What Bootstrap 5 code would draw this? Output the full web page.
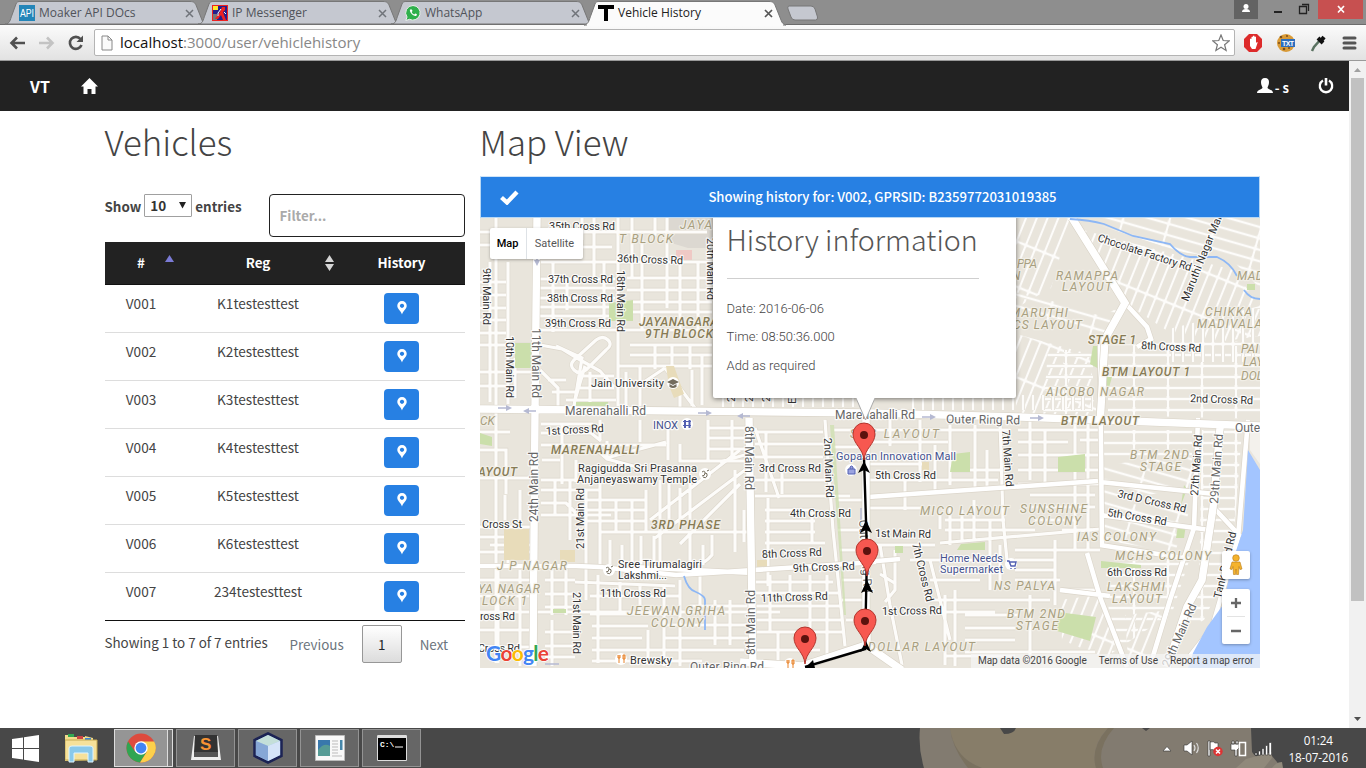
<!DOCTYPE html>
<html lang="en">
<head>
<meta charset="utf-8">
<title>Vehicle History</title>
<meta name="viewport" content="width=device-width, initial-scale=1">
<link rel="stylesheet" href="https://cdn.jsdelivr.net/npm/bootstrap@5.3.0/dist/css/bootstrap.min.css">
<style>
:root{--src:"Source Sans Pro","Noto Sans CJK SC",sans-serif;--ui:"Segoe UI","Open Sans",sans-serif}
html,body{height:768px;overflow:hidden}
body{font-family:var(--src);font-size:13.4px;line-height:20px;color:#444;background:#fff}
svg{display:block;flex:none}
/* browser frame */
.tabstrip{height:25px;background:#8e8e8e;padding-left:5px;font:12px/24px var(--ui);color:#50535a;border-bottom:1px solid #6c6c6c}
.btab{width:202px;height:25px;margin-right:-9px;padding:1px 13px 0 14px;position:relative}
.btab>svg.shape{position:absolute;left:0;top:0;z-index:0}
.btab>*{position:relative}
.btab.front{z-index:2;color:#222}
.toolbar{height:36px;background:linear-gradient(#fbfbfb,#e2e2e2);border-bottom:1px solid #9a9a9a;padding:0 8px 0 9px}
.omnibox{height:27px;border:1px solid #b4b4b4;border-radius:2px;background:#fff;font:15.05px/25px var(--ui);color:#888;width:1141px}
.omnibox b{font-weight:400;color:#111}
/* page */
.page-area{height:667px}
.scroller{width:17px;background:#f1f1f1}
.thumb{width:13px;height:523px;background:#c1c1c1;margin:0 auto}
.topbar{height:50px;background:#222;color:#fff;padding:0 15px 0 30px;font-weight:700}
.wrap-1170{width:1170px;--bs-gutter-x:30px;padding:0 15px;margin:0 auto}
.wrap-1170>.row{--bs-gutter-x:30px}
.page-title{font-weight:200;font-size:34.8px;line-height:38px;margin:11px 0 0;height:54px;color:#444}
.len{line-height:18px}
.len select{width:48px;height:23px;border:1px solid #a0a0a0;border-radius:1px;background:#fff;font:700 13.5px/18px var(--src);color:#333;padding:0 0 1px 5px;appearance:none}
.filter{width:196px;height:43px;border:1px solid #222;border-radius:4px;padding:0 10px 2px;font-weight:700;color:#333;background:#fff}
.filter::placeholder{color:#aaa;opacity:1}
.vt{table-layout:fixed;width:360px;margin:5px 0 0;border-bottom:1px solid #111;color:#444;text-align:center;font-size:13.6px}
.vt th{background:#222;color:#fff;height:42px;padding:0 0 2px;border-bottom:1px solid #111;position:relative;vertical-align:middle;font-size:13.4px}
.vt td{height:48px;padding:8px 0 0;border-bottom:1px solid #ddd;vertical-align:top}
.vt tr:last-child td{border-bottom:0}
.sort{position:absolute;right:4px;top:12px}
.btn-pin{width:35px;height:31px;background:#2780e3;border:0;border-radius:4px;padding:0;display:inline-flex;align-items:center;justify-content:center}
.pg-now{width:40px;height:38px;border:1px solid #979797;border-radius:2px;background:linear-gradient(#fff,#dcdcdc)}
.notice{height:42px;background:#2780e3;color:#fff;border-radius:0;border:1px solid #b7d7f5;border-top-color:#cfe4f8;margin:0;padding:0;font-weight:500;font-size:13.1px}
/* map */
.mapbox{height:450px;position:relative;overflow:hidden;background:#e9e5dc;font-family:Roboto,sans-serif}
.mapbox .ctl{position:absolute;background:#fff;border-radius:2px;box-shadow:0 1px 3px rgba(0,0,0,.3)}
.maptype{left:10px;top:10px;width:93px;height:31px;font-size:11px;color:#565656}
.bubble{position:absolute;left:233px;top:-6px;width:303px;height:186px;background:#fff;box-shadow:0 1px 5px rgba(0,0,0,.5);padding:7px 14px 0;font-weight:300;font-size:13px;border-radius:2px}
.bubble h3{font:200 28.7px/40px var(--src);margin:0;white-space:nowrap;color:#555}
.bubble hr{width:252px;margin:19px 0 16px;border-color:#bbb;opacity:.7}
.bubble p{margin:0;line-height:28.4px}
.legal{position:absolute;right:0;bottom:0;height:14px;background:rgba(245,245,245,.72);font-size:10px;line-height:14px;color:#444;padding:0 6px 0 7px;gap:12px;white-space:nowrap}
.lb{font:11px Roboto,sans-serif;fill:#333;stroke:#fff;stroke-width:2.4px;stroke-opacity:.8;paint-order:stroke;stroke-linejoin:round}
.lb .area{font-style:italic;fill:#a89f80;font-weight:400;stroke:#f4f1ea;font-size:12px}
.lb .dark{fill:#877b55;font-weight:500}
.lb .poi{fill:#45528f}
.lb .gr{fill:#666;font-size:12px}
/* taskbar */
.taskbar{height:40px;background:#484848;position:relative;color:#fff;font:11.7px/17px var(--ui)}
.task{width:59px;height:38px;border:1px solid #939393;background:#666;margin-right:3px}
.task.on{width:54px;background:#959595;border-color:#ddd;margin-right:0}
.task.pile{width:5px;border-left:0;background:#777;border-color:#ddd}
.wallpaper{position:absolute;right:0;top:0}
</style>
</head>
<body>
<header>
 <div class="tabstrip d-flex">
  <div class="btab d-flex align-items-center">
   <svg class="shape" width="202" height="25"><path d="M0 24C5 24 5 20 7 15L11 4C12 1.500 13 1.500 16 1.500H185C189 1.500 190 3 191 5L197 20C198 23 199 24 202 24Z" fill="#c5c8d0" stroke="#777"/></svg>
   <svg width="16" height="16"><rect width="16" height="16" fill="#2385b8"/><text x="1" y="12" font-family="Liberation Sans" font-size="10" textLength="14" lengthAdjust="spacingAndGlyphs" fill="#fff">API</text></svg>
   <span class="ms-1">Moaker API DOcs</span><svg class="ms-auto" width="9" height="9"><path d="M1 1l7 7M8 1l-7 7" stroke="#70747a" stroke-width="1.500"/></svg></div>
  <div class="btab d-flex align-items-center">
   <svg class="shape" width="202" height="25"><path d="M0 24C5 24 5 20 7 15L11 4C12 1.500 13 1.500 16 1.500H185C189 1.500 190 3 191 5L197 20C198 23 199 24 202 24Z" fill="#c5c8d0" stroke="#777"/></svg>
   <svg width="16" height="16"><rect width="16" height="16" fill="#e22"/><rect x="1" y="1" width="14" height="14" fill="#241f8c"/><path d="M1 1h5v4H1z" fill="#ffe92c"/><path d="M1 9h4v6H1z" fill="#777"/><path d="M10 2h3v3l-2 2 1 3 2 5h-3L9 10l-3 4H3l5-7z" fill="#e22"/><path d="M9 4L6 8v3M12 7l2 2" stroke="#fff" fill="none"/></svg>
   <span class="ms-1">IP Messenger</span><svg class="ms-auto" width="9" height="9"><path d="M1 1l7 7M8 1l-7 7" stroke="#70747a" stroke-width="1.500"/></svg></div>
  <div class="btab d-flex align-items-center">
   <svg class="shape" width="202" height="25"><path d="M0 24C5 24 5 20 7 15L11 4C12 1.500 13 1.500 16 1.500H185C189 1.500 190 3 191 5L197 20C198 23 199 24 202 24Z" fill="#c5c8d0" stroke="#777"/></svg>
   <svg width="16" height="16"><path d="M8 .5a7.300 7.300 0 11-3.500 13.800L.8 15.500 2 12A7.300 7.300 0 018 .5z" fill="#2fb04c" stroke="#eee"/><path d="M5 4.500c-1 2 3 7 6 6.500 1-.5 1-1.500.7-2l-1.500-.6-.9 1C8 9 7 8 6.700 7l.8-.9-.6-1.700z" fill="#fff"/></svg>
   <span class="ms-1">WhatsApp</span><svg class="ms-auto" width="9" height="9"><path d="M1 1l7 7M8 1l-7 7" stroke="#70747a" stroke-width="1.500"/></svg></div>
  <div class="btab front d-flex align-items-center">
   <svg class="shape" width="202" height="26"><path d="M0 25C5 24 5 20 7 15L11 4C12 1.500 13 1.500 16 1.500H185C189 1.500 190 3 191 5L197 20C198 23 199 24 202 25Z" fill="#fbfbfb" stroke="#777"/><path d="M3 25h196" stroke="#fbfbfb" stroke-width="2"/></svg>
   <svg width="16" height="16"><path d="M0 0h16v4h-6v12H6V4H0z"/></svg>
   <span class="ms-1">Vehicle History</span><svg class="ms-auto" width="9" height="9"><path d="M1 1l7 7M8 1l-7 7" stroke="#555" stroke-width="1.700"/></svg></div>
  <svg style="margin-left:8px" width="34" height="22"><path d="M4 6h22q3 0 4 3l2.500 8q.5 3-2 3H10q-3 0-4-3L3 9q-1-3 1-3z" fill="#c5c8d0" stroke="#777"/></svg>
  <svg class="ms-auto" width="132" height="24"><path d="M0 0h24v19H0z" fill="#636363"/><circle cx="12" cy="6.500" r="2.500" fill="#fff"/><path d="M8 12q0-3 4-3t4 3z" fill="#fff"/><path d="M40 11h8v2h-8z" fill="#222"/><path d="M65.500 6.500h7v7h-7zM68 4.500h6.500V11" fill="none" stroke="#222" stroke-width="1.300"/><path d="M84 0h45v19H84z" fill="#c75050"/><path d="M104 6l6 6.500M110 6l-6 6.500" stroke="#fff" stroke-width="1.700"/></svg>
 </div>
 <div class="toolbar d-flex align-items-center">
  <svg width="85" height="20"><g fill="none" stroke-width="2.600"><path d="M16 10H3M8 4.500L2.500 10 8 15.500" stroke="#505050"/><path d="M30 10h13M38 4.500l5.500 5.500-5.500 5.500" stroke="#c3c3c3"/><path d="M71.500 6A6 6 0 1 0 72.500 12" stroke="#505050"/></g><path d="M74 2.500v6.500h-6.500z" fill="#505050"/></svg>
  <div class="omnibox d-flex align-items-center">
   <svg width="12" height="16" style="margin-left:6px"><path d="M1 1h6l4 4v10H1zM7 1v4h4" fill="#fafafa" stroke="#888"/></svg>
   <span style="margin-left:7px"><b>localhost</b>:3000/user/vehiclehistory</span>
   <svg class="ms-auto me-1" width="18" height="18"><path d="M9 1l2.200 5.500 6 .4-4.600 3.800 1.500 5.800L9 13.300l-5.100 3.200 1.500-5.800L.8 6.900l6-.4z" fill="#fff" stroke="#777" stroke-width="1.200"/></svg>
  </div>
  <svg class="ms-auto" width="114" height="20"><path d="M5 1h8l5 5v8l-5 5H5l-5-5V6z" fill="#dd2b2b"/><path d="M6 13V6q1-1 1.500 0V4q1-1 1.500 0V3q1-1 1.500 0v1q1-1 1.500 0v6l1-1q1 0 .5 1l-2 6H8z" fill="#fff"/><circle cx="42" cy="10" r="9" fill="#d99b38"/><g fill="#7b4d18"><circle cx="37" cy="4" r="1.300"/><circle cx="43" cy="3" r="1"/><circle cx="35" cy="10" r="1"/><circle cx="40" cy="16" r="1.300"/><circle cx="45" cy="15" r="1"/></g><path d="M37 6h14v8H37z" fill="#2e6ebd"/><text x="38" y="12.500" font-size="7" font-weight="700" textLength="12" font-family="Liberation Sans" fill="#fff">TXT</text><path d="M68 18l2-4 7-8" stroke="#5a7261" stroke-width="2.500" fill="none"/><path d="M74 5l5 5M77 8l3-4" stroke="#111" stroke-width="4" fill="none"/><path d="M100 5h11M100 10h11M100 15h11" stroke="#555" stroke-width="3" stroke-linecap="round"/></svg>
 </div>
</header>

<main class="page-area d-flex">
 <div class="flex-grow-1">
  <nav class="topbar d-flex align-items-center">
   <span style="font-size:16px">VT</span>
   <svg style="margin-left:31px" width="17" height="16"><path d="M8.500 0L17 8.500h-2.500V16h-4v-5h-4v5h-4V8.500H0L6 2.500z" fill="#fff"/></svg>
   <svg class="ms-auto" width="16" height="16"><path d="M8 0c3 0 4 2 4 4 0 3-1 4-1.500 5.500 0 2 5.500 2 5.500 5.500H0c0-3.500 5.500-3.500 5.500-5.500C5 8 4 7 4 4c0-2 1-4 4-4z" fill="#fff"/></svg>
   <span style="margin-left:2px;padding-top:3px;font-size:13px">- s</span>
   <svg style="margin-left:29px" width="16" height="16"><path d="M5 2.600a6.200 6.200 0 1 0 6 0" fill="none" stroke="#fff" stroke-width="2.300"/><path d="M6.700 0h2.600v7.500H6.700z" fill="#fff"/></svg>
  </nav>
  <div class="wrap-1170"><div class="row">
   <section class="col-4">
    <h2 class="page-title">Vehicles</h2>
    <div class="d-flex justify-content-between" style="padding-top:18px">
     <label class="len fw-bold d-flex align-items-center" style="height:23px;gap:3px"><span>Show</span><span class="position-relative"><select class="d-block"><option>10</option></select><svg class="position-absolute" style="right:6px;top:8px" width="7" height="7"><path d="M0 0h7L3.500 6.500z" fill="#222"/></svg></span><span>entries</span></label>
     <input class="filter" placeholder="Filter...">
    </div>
    <table class="vt">
     <colgroup><col style="width:73px"><col style="width:161px"><col style="width:126px"></colgroup>
     <thead><tr><th>#<svg class="sort" width="9" height="18"><path d="M0 8L4.500 1 9 8z" fill="#7b7bd6"/></svg></th><th>Reg<svg class="sort" style="right:5px" width="9" height="18"><path d="M0 8L4.500 1 9 8zM0 10h9l-4.500 7z" fill="#d5d5d5"/></svg></th><th>History</th></tr></thead>
     <tbody id="rows"></tbody>
    </table>
    <div class="d-flex" style="padding-top:4px">
     <span style="width:185px;padding-top:7px">Showing 1 to 7 of 7 entries</span>
     <span class="d-flex align-items-center text-secondary" style="gap:18px;line-height:18px"><span>Previous</span><span class="pg-now d-flex align-items-center justify-content-center text-dark">1</span><span>Next</span></span>
    </div>
   </section>
   <section class="col-8 p-0">
    <h2 class="page-title">Map View</h2>
    <div class="notice d-flex align-items-center">
     <svg style="margin-left:19px" width="19" height="15"><path d="M1.500 7.500l5.500 5L17 2" fill="none" stroke="#fff" stroke-width="4.300"/></svg>
     <span class="flex-grow-1 text-center" style="padding-right:12px">Showing history for: V002, GPRSID: B2359772031019385</span>
    </div>
    <div class="mapbox">
     <svg width="780" height="450" viewBox="480 218 780 450">
      <defs>
       <pattern id="wide" width="34" height="11" patternUnits="userSpaceOnUse"><path d="M0 3H34M12 3V11" stroke="#dcd6cb" stroke-width="4"/><path d="M0 3H34M12 0V11" stroke="#fdfcfa" stroke-width="2.800"/></pattern>
       <pattern id="tall" width="10" height="37" patternUnits="userSpaceOnUse"><path d="M3 0V37M0 11H10" stroke="#dcd6cb" stroke-width="4"/><path d="M3 0V37M0 11H10" stroke="#fdfcfa" stroke-width="2.800"/></pattern>
       <pattern id="tilt" width="10" height="42" patternUnits="userSpaceOnUse" patternTransform="rotate(22)"><path d="M3 0V42M0 11H10" stroke="#dcd6cb" stroke-width="4"/><path d="M3 0V42M0 11H10" stroke="#fdfcfa" stroke-width="2.800"/></pattern>
       <pattern id="slope" width="45" height="11" patternUnits="userSpaceOnUse" patternTransform="rotate(16)"><path d="M0 3H45M15 3V11" stroke="#dcd6cb" stroke-width="4"/><path d="M0 3H45M15 0V11" stroke="#fdfcfa" stroke-width="2.800"/></pattern>
       <g id="pin"><path d="M0 0C-1-12-11-16-11-26A11 11 0 0 1 11-26C11-16 1-12 0 0Z" fill="#f75850" stroke="#b3352d"/><circle cy="-25" r="4" fill="#5b120e"/></g>
       <g id="streets" fill="none">
        <path d="M480 232h55M480 245h10M496 218v445M480 345h54M490 262v140M508 262v142M480 282h26M480 295h26M480 308h26M480 320h26M480 333h26M480 372h54M480 386h28M515 358v40"/>
        <path d="M537 232h170M540 247h72M540 262h172M540 279h75M540 288h75M540 298h75M540 307h75M540 316h75M540 330h170M553 262v70M567 280v30M582 218v22M594 218v62M604 262v60M618 218v192M632 218v60M642 240v90M655 218v18M667 218v90M680 262v68M698 262v70M627 278h85M627 290h85M627 302h85M627 312h85M630 345h82M630 355h82M618 366h94M655 345v24M672 345v24M690 345v24M702 355v50"/>
        <path d="M540 345l22 4 20 12 18 10 14 16M556 346l26 12-8 48M575 400l10-34M574 360l22-20q7-5 12 0t-2 10l-20 20q-7 5-12 0t0-10M540 370l18 18v20M548 380h18M552 392h24M590 372v34M580 376h34M580 388h34M566 400h50M626 372v36M640 366v42M665 368l-24 16M665 368l30 40M680 388v20M692 370v36"/>
        <path d="M541 424h52M541 433h50l10 8M541 445h125M562 424v60M590 444l16 14 60-16M600 420v20M607 441v18l30 8M640 420v22M560 460h-18M576 460v22M668 420v40M680 444v17h68M708 420v40M708 428h40M708 438h40M708 449h40M732 420v36"/>
        <path d="M541 480h60M541 490h60M555 480v34M570 480v60M541 503h25l10 10M541 515h70M586 490v110M600 478v90M586 500h60M586 510h60M586 521h60M600 532h148M616 500v32M632 500v68M646 490v42M660 480v90M669 480v50M680 488v42M690 480v50M720 462l28-8M740 450l-90 70M745 470l-90 68M740 484l-60 60M690 535v28M703 545v20M712 535v20q-10 12-20 8M610 540v24M622 545v20M641 536v30M654 536v30M735 470v82M744 510v32"/>
        <path d="M480 432h30M480 450h26v44M480 478h50M505 495v25M520 490v34M480 527h52M490 545h40M480 552h52M480 537h30M508 527v38M498 565v98M520 570v96M480 580h52M480 596h52M480 612h300M480 630h52M480 647h52M545 580h30M545 594h30M545 607h30M545 632h30M545 646h30M545 657h30M552 565v50M566 565v50M552 620v46"/>
        <path d="M575 582l100 4M598 575v88M590 596h90M590 614h90M592 626h56M592 638h50M592 650h110M592 661h110M620 582v30M640 584v26M664 586v80M680 580v86M648 630v34M664 650h80M664 638h84M664 625h84M690 606h60M700 575v34M715 600v45M730 600v45"/>
        <path d="M755 432h68M755 444h68M755 457h68M755 480h78M755 496h95M766 432v60M782 470v24M755 428l24 70M765 510h50M765 521h50M765 532h50M765 543h60M768 498v88M812 512v32M755 582h78M755 593h85M755 606h85M755 620h88M755 632h88M770 575v56M790 575v20M810 575v56M827 575v80M755 650h65M778 632v34M800 632v20"/>
        <path d="M825 420l8 110 12 116M834 430h30M834 447h30M838 500h26M838 530h28M840 550h26M842 580h24M842 600h24M846 620h20"/>
        <path d="M868 430h140M868 442h80M868 464h60M868 480h130M868 497l170-12M868 508h56M890 420v26M905 480v30M920 420v62M935 445v48M950 425v60M975 425v62M987 450v36M950 470h50M940 515v14M950 505v40M962 510v30M945 520h60M945 530h90M940 543l160-14M974 500v40M990 520v70M1000 420l3 100 4 40"/>
        <path d="M875 545h60M880 545l10 60 12 60M895 550v40l-10 12M910 560h20l20 80M870 560h24M880 574l16 10M925 560h60M930 580h50M945 595v70M955 590v76M930 600h120M935 612h60M965 615h55M965 628h50M965 640h50M965 652h130M945 656h70M1030 595v60M1000 545v45M1015 550h40M1015 560h40M1015 570h40M1015 580h45M1055 540v65M1060 590h40"/>
        <path d="M1018 430h80M1018 442h50M1018 455h80M1018 470h80M1018 484h82M1030 420v60M1045 430v55M1075 420v130M1088 420v130M1030 495h65M1030 507h65M1035 520h40M1062 530h30M1080 440h20M1055 550h45"/>
       </g>
       <g id="avenues" fill="none">
        <path d="M480 566h96l24 1 76 8 33-2 167-11M753 573l-120-6M868 497l230-16M866 562l34-3M1100 337l2 210M1087 553l13 44 27 70M1100 482l115 12M1100 515l110 15M1100 545l90 14M1125 303l22 24 4 12-14 8M1198 418l-4 110-24 72-20 66M1213 507l28 30M1248 420l-10 118-26 90-22 28M1060 590l50 6"/>
       </g>
       <g id="arterials" fill="none"><path d="M480 409l390 4 150 4 240 9M537 218l-2 192-2 256M749 418l4 250M866 413v232M740 662l62 4 64-21 36 25M867 610v35M1072 218l53 85-20 36-5 85M1220 428l-7 80-11 72-15 27-20 60"/></g>
      </defs>
      <rect x="480" y="218" width="780" height="450" fill="#e9e5dc"/>
      <path d="M668 218h45v30h-25l-20-6z" fill="#dcd8d1"/><path d="M676 250h16v12h-16z" fill="#efc9c5"/>
      <path d="M1016 218h55l-20 70-35 20zM1016 420h80v-20h-80z" fill="url(#tilt)"/>
      <path d="M1016 290l85 26 22-10-20 34-87-30z" fill="url(#slope)"/>
      <path d="M1020 335l72 20v50l-76 10V340z" fill="url(#tilt)"/><path d="M1048 350h45v64h-50z" fill="url(#wide)"/>
      <path d="M1080 218h180v70l-30-30-50-6-90-30z" fill="url(#slope)"/>
      <path d="M1083 230l150 40 27 36v30l-70 10-60-40z" fill="url(#tilt)"/>
      <path d="M1108 345l152-4v78l-152-4z" fill="url(#wide)"/><path d="M1165 330l95-24v56l-95 0z" fill="url(#tall)"/>
      <path d="M716 395h145v12H716zM905 395h188v15H905z" fill="url(#tall)"/>
      <path d="M1104 430h88v28h-88z" fill="url(#wide)"/><path d="M1104 465l88-10v32l-88 16z" fill="url(#slope)"/>
      <path d="M1104 500l85 12-14 40-72-12z" fill="url(#slope)"/><path d="M1105 562l85-4-18 55-60 40z" fill="url(#wide)"/>
      <path d="M1125 615l45-5-16 55-26-4zM1060 600l38-5 24 70-60-25z" fill="url(#tilt)"/><path d="M1202 430h40l-10 130-28 60-20 10 15-40z" fill="url(#wide)"/>
      <use href="#streets" stroke="#dcd6cb" stroke-width="4.400"/><use href="#streets" stroke="#fdfcfa" stroke-width="3.200"/>
      <g fill="#cbdfab"><path d="M609 303l24-3v21h-24zM515 343h17v25h-17zM576 402h32v4h-32zM480 433l12 4v9l-12-2zM553 609h13v4h-13zM953 454l17-2v20h-20zM1058 457l27-3v18h-27zM1058 612l38 5-6 24-33-10zM961 544l24-2v8h-28zM1093 346h8v24l-11-6zM1105 377h7l-4 14zM1247 284h8v6h-8zM895 546h8v7h-8zM1178 525l8-1-2 14h-8zM1101 561l40 4v3h-40zM1184 485l3 4-6 16z"/><path d="M830 425l4 0 6 95 6 95h-2z" opacity=".7"/></g>
      <g fill="#e8dcba"><path d="M504 529h25v31h-25zM560 550h15v12h-15zM666 366h8l10 28-10 4-5-12zM757 560h10v8h-10zM922 462h7v9h-7z"/></g>
      <use href="#avenues" stroke="#dcd6cb" stroke-width="6"/><use href="#avenues" stroke="#fff" stroke-width="4.600"/>
      <path d="M1248 450l-5 80-10 30-10 45-16 22-14 26-5 15h72V470z" fill="#a3c5ff"/>
      <path d="M1250 428v22l10 14v-36z" fill="#f3f1ec"/>
      <use href="#arterials" stroke="#d8d2c6" stroke-width="8.600"/><use href="#arterials" stroke="#fff" stroke-width="7.400"/>
      <path d="M1070 219q20 1 34 5l29 12 37 8q10 12 20 13h27q14 6 20 19M1244 290q6 9 16 9M684 576q4 14 12 16 9 4 9 8v30" fill="none" stroke="#8db7f5" stroke-width="1.800"/>
      <g stroke="#b5b9d2" stroke-width="1.500" fill="#b5b9d2"><path d="M498 408h8M528 411h8M698 413h8M742 416h8M922 417h8M1030 418h8M545 664h14M861 508v12M537 256v6"/><path stroke="none" d="M506 405l6 3-6 3zM529 408l-6 3 6 3zM706 410l6 3-6 3zM743 413l-6 3 6 3zM930 414l6 3-6 3zM1038 415l6 3-6 3zM534 260h6l-3 6z"/></g>
      <g class="lb">
       <text x="549" y="230" textLength="66">35th Cross Rd</text><text x="617" y="262" textLength="66" transform="rotate(2 617 262)">36th Cross Rd</text><text x="548" y="283" textLength="65">37th Cross Rd</text><text x="547" y="302" textLength="66">38th Cross Rd</text><text x="545" y="327" textLength="66">39th Cross Rd</text>
       <text class="area" x="619" y="243" textLength="54">T BLOCK</text><text class="area" x="680" y="229" textLength="42">JAYAN</text><text class="area dark" x="639" y="326" textLength="79">JAYANAGARA</text><text class="area dark" x="645" y="338" textLength="68">9TH BLOCK</text>
       <text transform="translate(617 270) rotate(90)" textLength="62">18th Main Rd</text><text transform="translate(483 268) rotate(90)" textLength="57">9th Main Rd</text><text transform="translate(506 336) rotate(90)" textLength="62">10th Main Rd</text><text class="gr" transform="translate(532 328) rotate(90)" textLength="70">11th Main Rd</text><text transform="translate(707 238) rotate(90)" textLength="62">20th Main Rd</text>
       <text x="591" y="387" textLength="73">Jain University</text><text class="gr" x="565" y="415" textLength="81">Marenahalli Rd</text><text class="gr" x="835" y="419" textLength="80">Marenahalli Rd</text><text x="946" y="423" textLength="74" class="gr" transform="rotate(1 946 423)">Outer Ring Rd</text><text class="poi" x="653" y="429" textLength="25">INOX</text>
       <text transform="translate(735 402) rotate(-90)">2nd</text><text transform="translate(753 402) rotate(-90)">2nd</text><text transform="translate(770 402) rotate(-90)">2nd</text><text transform="translate(796 404) rotate(-90)">East</text>
       <text transform="translate(1097 241) rotate(18)" textLength="98">Chocolate Factory Rd</text><text transform="translate(1188 302) rotate(-68)" textLength="97">Maruthi Nagar Main</text>
       <text class="area" x="1056" y="280" textLength="62">RAMAPPA</text><text class="area" x="1062" y="291" textLength="50">LAYOUT</text><text class="area" x="1017" y="268" textLength="20">PPA</text><text class="area" x="1012" y="280">N</text><text class="area" x="1010" y="317" textLength="58">MARUTHI</text><text class="area" x="1013" y="329" textLength="69">CS LAYOUT</text>
       <text class="area" x="1237" y="280" textLength="38">MADIV</text><text class="area" x="1205" y="316" textLength="47">CHIKKA</text><text class="area" x="1197" y="328" textLength="65">MADIVALA</text><text class="area dark" x="1088" y="344" textLength="48">STAGE 1</text><text transform="translate(1141 349) rotate(3)" textLength="60">8th Cross Rd</text><text class="area dark" x="1102" y="376" textLength="88">BTM LAYOUT 1</text><text class="area" x="1046" y="396" textLength="98">AICOBO NAGAR</text><text x="1190" y="402" textLength="63" transform="rotate(2 1190 402)">2nd Cross Rd</text><text class="area dark" x="1061" y="425" textLength="78">BTM LAYOUT</text><text class="gr" x="1235" y="432">Outer</text><text class="area" x="1241" y="353">PAI</text><text class="area" x="1243" y="366">LAY</text><text class="area" x="1241" y="380">DOL</text>
       <text class="area" x="480" y="425">CK</text><text transform="translate(546 435) rotate(-3)" textLength="58">1st Cross Rd</text><text class="area dark" x="551" y="454" textLength="88">MARENAHALLI</text><text x="578" y="472" textLength="119">Ragigudda Sri Prasanna</text><text x="577" y="483" textLength="120">Anjaneyaswamy Temple</text><text class="area dark" x="478" y="476" textLength="39">AYOUT</text>
       <text class="gr" transform="translate(538 522) rotate(-90)" textLength="70">24th Main Rd</text><text transform="translate(584 549) rotate(-90)" textLength="61">21st Main Rd</text><text x="482" y="528" textLength="40">Cross St</text><text class="area dark" x="651" y="529" textLength="69">3RD PHASE</text><text class="area" x="497" y="570" textLength="70">J P NAGAR</text><text x="618" y="568" textLength="84">Sree Tirumalagiri</text><text x="618" y="579" textLength="49">Lakshmi...</text><text class="area" x="478" y="593" textLength="62">YA NAGAR</text><text class="area" x="482" y="605" textLength="45">LOCK 1</text><text x="600" y="597" textLength="66">11th Cross Rd</text><text transform="translate(573 592) rotate(90)" textLength="62">21st Main Rd</text><text class="area" x="627" y="615" textLength="98">JEEWAN GRIHA</text><text class="area" x="651" y="627" textLength="52">COLONY</text><text x="480" y="620" textLength="35">ross Rd</text><text x="478" y="652" textLength="42">Cross Rd</text><text x="630" y="664" textLength="42">Brewsky</text><text class="gr" x="690" y="671" textLength="74">Outer Ring Rd</text>
       <text class="gr" transform="translate(745 426) rotate(90)" textLength="64">8th Main Rd</text><text class="gr" transform="translate(755 655) rotate(-90)" textLength="65">8th Main Rd</text><text x="759" y="472" textLength="62">3rd Cross Rd</text><text transform="translate(824 438) rotate(88)" textLength="60">2nd Main Rd</text><text x="790" y="517" textLength="61">4th Cross Rd</text><text x="762" y="558" textLength="60" transform="rotate(-2 762 558)">8th Cross Rd</text><text x="793" y="572" textLength="62" transform="rotate(-2 793 572)">9th Cross Rd</text><text x="761" y="602" textLength="67" transform="rotate(-2 761 602)">11th Cross Rd</text>
       <text class="area" x="850" y="438" textLength="89">SRS LAYOUT</text><text class="poi" x="836" y="460" textLength="120">Gopalan Innovation Mall</text><text x="875" y="479" textLength="61">5th Cross Rd</text><text transform="translate(1002 430) rotate(86)" textLength="57">7th Main Rd</text><text class="area" x="1130" y="459" textLength="59">BTM 2ND</text><text class="area" x="1140" y="471" textLength="41">STAGE</text><text transform="translate(1198 496) rotate(-86)" textLength="61">27th Main Rd</text><text class="gr" transform="translate(1218 504) rotate(-86)" textLength="70">29th Main Rd</text>
       <text class="area" x="920" y="515" textLength="89">MICO LAYOUT</text><text class="area" x="1020" y="513" textLength="67">SUNSHINE</text><text class="area" x="1028" y="525" textLength="53">COLONY</text><text transform="translate(1117 497) rotate(13)" textLength="70">3rd D Cross Rd</text><text transform="translate(1107 516) rotate(9)" textLength="60">5th Cross Rd</text><text transform="translate(875 537) rotate(1)" textLength="56">1st Main Rd</text><text class="area" x="1077" y="541" textLength="79">IAS COLONY</text><text transform="translate(912 544) rotate(76)" textLength="60">7th Cross Rd</text><text class="poi" x="940" y="562" textLength="63">Home Needs</text><text class="poi" x="940" y="573" textLength="63">Supermarket</text><text class="area" x="1115" y="560" textLength="96">MCHS COLONY</text><text x="1107" y="576" textLength="60">6th Cross Rd</text><text class="area" x="994" y="590" textLength="61">NS PALYA</text><text class="area" x="1107" y="591" textLength="58">LAKSHMI</text><text class="area" x="1112" y="603" textLength="50">LAYOUT</text><text x="882" y="615" textLength="60" transform="rotate(-1 882 615)">1st Cross Rd</text><text class="area" x="1007" y="618" textLength="58">BTM 2ND</text><text class="area" x="1016" y="630" textLength="42">STAGE</text><text class="area" x="868" y="651" textLength="107">DOLLAR LAYOUT</text><text class="gr" transform="translate(1169 668) rotate(-66)" textLength="68">29th Main Rd</text><text transform="translate(1221 599) rotate(-77)" textLength="68">Tank Bund Rd</text><text transform="translate(859 520) rotate(86)" class="gr">Outer Ring Rd</text>
      </g>
      <g fill="#fff"><circle cx="673" cy="383" r="6"/><circle cx="687" cy="424" r="6"/><circle cx="705" cy="474" r="6"/><circle cx="609" cy="570" r="6"/><circle cx="851" cy="470" r="6"/><circle cx="1011" cy="564" r="6"/><circle cx="621" cy="659" r="6"/><circle cx="790" cy="664" r="6"/></g>
      <path d="M667 382l6-3 6 3-6 3zM669.500 384v3q3.500 2 7 0v-3l-3.500 2z" fill="#746d5d"/><path d="M684 420h2v8h-2zM688.500 420h2v8h-2zM683 421h8v1h-8zM683 425h8v1h-8z" fill="#5360b2"/><g fill="none" stroke="#746d5d"><path d="M702 472q3-2 3 1t-3 3M705 473q3 0 2 3t-4 1M707 471l2-1"/><path d="M606 568q3-2 3 1t-3 3M609 569q3 0 2 3t-4 1M611 567l2-1"/></g><path d="M848 469h7v5h-7zM850 469v-2q1.500-2 3 0v2" fill="#9ba3e0" stroke="#5360b2"/><path d="M1007 561h2l2 5h4l1-4h-6M1011 568v1M1015 568v1" fill="none" stroke="#5360b2" stroke-width="1.400"/><path d="M619 655v8M618 655v3h2v-3M624 655v8M623 655h2v4h-2zM788 660v8M787 660v3h2v-3M793 660v8M792 660h2v4h-2z" stroke="#e8832a" fill="none"/>
      <path d="M805 667l60-18 2-97-3-94" fill="none" stroke="#000" stroke-width="2.400"/>
      <g><path d="M864 461l6 12-6-3-6 3zM866 520l6 13-6-3-6 3zM867 580l6 13-6-3-6 3zM866 641l5 11-5-3-6 3zM805 668l8-8 2 8z"/></g>
      <use href="#pin" transform="translate(864 460)"/><use href="#pin" transform="translate(867 576)"/><use href="#pin" transform="translate(865 646)"/><use href="#pin" transform="translate(805 664)"/>
      <text x="486" y="661" font-family="Lato,sans-serif" font-size="21" textLength="63" font-weight="700" paint-order="stroke" stroke="#fff" stroke-width="1.500"><tspan fill="#4285f4">G</tspan><tspan fill="#ea4335">o</tspan><tspan fill="#fbbc05">o</tspan><tspan fill="#4285f4">g</tspan><tspan fill="#34a853">l</tspan><tspan fill="#ea4335">e</tspan></text>
     </svg>
     <div class="bubble"><h3>History information</h3><hr><p>Date: 2016-06-06</p><p>Time: 08:50:36.000</p><p>Add as required</p></div>
     <svg class="position-absolute" style="left:375px;top:178px" width="22" height="26"><path d="M1 2l9.500 22L20 2" fill="#fff" stroke="#aaa"/><path d="M0 0h22v2H0z" fill="#fff"/></svg>
     <div class="ctl maptype d-flex align-items-center"><span class="text-center text-black fw-medium border-end" style="width:37px;line-height:31px">Map</span><span class="flex-grow-1 text-center">Satellite</span></div>
     <div class="ctl d-flex align-items-center justify-content-center" style="right:10px;top:333px;width:28px;height:28px"><svg width="14" height="22"><circle cx="7" cy="4" r="3.300" fill="#f5b32d" stroke="#b77a16" stroke-width=".6"/><path d="M3 8h8l2 7-2 .5-1-3-.5 8h-2L7 15l-.5 5.500h-2L4 12.500l-1 3-2-.5z" fill="#f5b32d" stroke="#b77a16" stroke-width=".6"/></svg></div>
     <div class="ctl" style="right:10px;top:371px;width:28px;height:55px"><svg width="28" height="55"><path d="M9 14h10M14 9v10M9 42h10" stroke="#666" stroke-width="2.300"/><path d="M5 27.500h18" stroke="#e3e3e3"/></svg></div>
     <div class="legal d-flex"><span>Map data ©2016 Google</span><span>Terms of Use</span><span>Report a map error</span></div>
    </div>
   </section>
  </div></div>
 </div>
 <aside class="scroller d-flex flex-column"><svg width="17" height="17"><path d="M5 11h7L8.500 7z" fill="#a0a0a0"/></svg><div class="thumb"></div><svg class="mt-auto" width="17" height="17"><path d="M5 6h7l-3.500 4z" fill="#505050"/></svg></aside>
</main>

<footer class="taskbar d-flex align-items-center">
 <svg class="wallpaper" width="460" height="40"><path d="M14 0H345L346 24Q352 34 366 28L376 40H18Q12 20 14 0Z" fill="#827b70"/><path d="M44 0Q48 30 76 40H190Q184 18 202 0Z" fill="#877d69"/><path d="M44 0Q48 30 76 40H62Q46 20 44 0ZM202 0Q184 20 190 40H197Q190 20 208 0Z" fill="#7a715f"/><path d="M94 0h16q-2 6-12 6zM236 0h8l-4 3z" fill="#484848"/><path d="M340 31l26-7v6l-8 10h-28zM366 40q4-6 10-6l1 6z" fill="#90897b"/></svg>
 <svg style="margin-left:12px" width="27" height="27"><path d="M0 4l11-1.500V13H0zM12 2.300L27 0v13H12zM0 14h11v10.500L0 23zM12 14h15v13l-15-2.300z" fill="#fff"/></svg>
 <svg style="margin-left:26px" width="49" height="32"><path d="M0 5V3h8l1 2h11V4l8 2v4l4-1v19l-32 1z" fill="#f3dc8c"/><path d="M3 2h6v3H3z" fill="#32a852"/><path d="M12 4h6v3h-6z" fill="#c44"/><path d="M20 6h6v3h-6z" fill="#3a86d0"/><path d="M0 8h32v20H0z" fill="#f6e19a" stroke="#c6a951"/><path d="M4 30V16q0-2 3-2h18q3 0 3 2v14h-5V21H9v9z" fill="#8ac9ea" stroke="#e0f5ff"/></svg>
 <div class="task on d-flex align-items-center justify-content-center"><svg width="30" height="30" viewBox="-15 -15 30 30"><circle r="14.500" fill="#dd4b3e"/><path d="M-13-6.500A14.500 14.500 0 0 0-1 14.400L6 3.500-6 3.500z" fill="#30a552"/><path d="M13.200-6.500H0L6 3.500-1 14.400A14.500 14.500 0 0 0 13.200-6.500z" fill="#fcd04b"/><circle r="6.700" fill="#fff"/><circle r="5.400" fill="#4285f4"/></svg></div>
 <div class="task pile"></div>
 <div class="task d-flex align-items-center justify-content-center"><svg width="30" height="28"><path d="M3 2h24l3 24H0z" fill="#eee"/><path d="M4 1h22l1 17H3z" fill="#333"/><path d="M3 18h24v5H3z" fill="#555"/><text x="9" y="16" font-family="Liberation Sans" font-weight="700" font-size="17" fill="#f79433">S</text></svg></div>
 <div class="task d-flex align-items-center justify-content-center"><svg width="30" height="32"><path d="M15 1.500L28.500 8v16L15 30.500 1.500 24V8z" fill="#a5c5e8" stroke="#1c2354" stroke-width="2.500"/><path d="M15 3L27 9l-12 5L3 9z" fill="#c4dfd9"/><path d="M15 14l12-5v14l-12 6z" fill="#d5e4f8"/><path d="M3 9l12 5v15L3 23z" fill="#86a7d6"/></svg></div>
 <div class="task d-flex align-items-center justify-content-center"><svg width="30" height="26"><path d="M.5.5h29v25H.5z" fill="#f8f8f8" stroke="#bbb"/><path d="M3 5h12v16H3z" fill="#559b95"/><path d="M3 15q6-8 12-4V5H3z" fill="#3878ac"/><path d="M17 6h6M17 9h6M17 12h6M17 15h6M17 18h6M17 21h10" stroke="#bbb"/><path d="M25 5h2.500v10H25z" fill="#4687aa"/></svg></div>
 <div class="task d-flex align-items-center justify-content-center"><svg width="30" height="26"><path d="M.5.5h29v25H.5z" fill="#000" stroke="#ddd"/><path d="M1 1h28v2H1z" fill="#ddd"/><text x="3" y="12" font-family="Liberation Mono" font-size="8" font-weight="700" fill="#fff">C:\</text><path d="M18 12h8" stroke="#fff"/></svg></div>
 <div class="ms-auto position-relative d-flex align-items-center" style="margin-right:18px">
  <svg width="112" height="20" style="margin-right:15px"><g fill="#fff" stroke="#333" stroke-width=".6"><path d="M1 13h8L5 8.500z"/><path d="M22 7h3l5-4v14l-5-4h-3z"/><path d="M46 3h2v15h-2zM48 4q4-1 5 1h3v7h-4q-2-1-4 0z"/><path d="M74 3h2v3h-2zM70 3h2v3h-2zM69 6h8v4l-2 2v6h-2v-6h-4z"/><path d="M93 15h2v2h-2zM96.500 13h2v4h-2zM100 10.500h2V17h-2zM103.500 7.500h2.200V17h-2.200zM107 4.500h2.500V17H107z"/></g><path d="M32 7q2 3 0 6M34.500 5q3.500 5 0 10" fill="none" stroke="#ddd" stroke-width="1.200"/><circle cx="56" cy="13.500" r="4.700" fill="#d33"/><path d="M54 11.500l4 4M58 11.500l-4 4" stroke="#fff" stroke-width="1.500"/><path d="M77.500 4.500h6v13h-6z" fill="none" stroke="#fff" stroke-width="1.500"/></svg>
  <div class="text-center" style="letter-spacing:-.15px;padding-top:2px">01:24<br>18-07-2016</div>
 </div>
</footer>
<script>
const vehicles=[["V001","K1testesttest"],["V002","K2testesttest"],["V003","K3testesttest"],["V004","K4testesttest"],["V005","K5testesttest"],["V006","K6testesttest"],["V007","234testesttest"]];
document.getElementById("rows").innerHTML=vehicles.map(([id,reg])=>`<tr><td>${id}</td><td>${reg}</td><td><button class="btn-pin" aria-label="History"><svg width="10" height="14"><path d="M5 0a4.700 4.700 0 0 1 4.700 5C9.700 8 6 10 5 13.500 4 10 .3 8 .3 5A4.700 4.700 0 0 1 5 0zM5 2.700a2.100 2.100 0 1 0 .01 0z" fill="#fff" fill-rule="evenodd"/></svg></button></td></tr>`).join("");
</script>
<script src="https://cdn.jsdelivr.net/npm/bootstrap@5.3.0/dist/js/bootstrap.bundle.min.js"></script>
</body>
</html>
